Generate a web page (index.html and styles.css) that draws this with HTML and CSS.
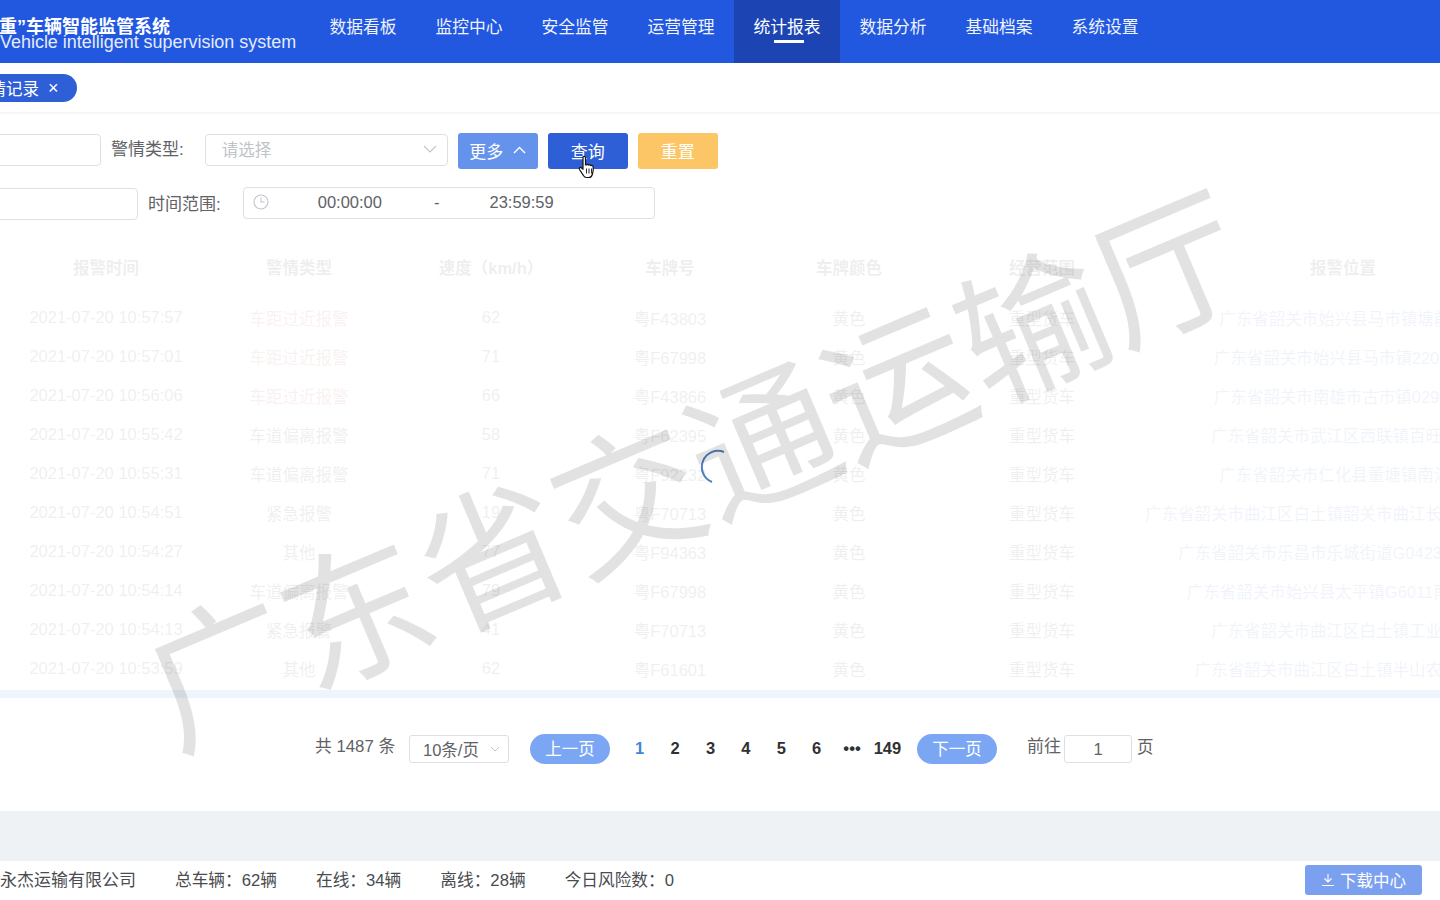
FILE: index.html
```html
<!DOCTYPE html>
<html>
<head>
    <title>报警记录</title>
    <link rel="stylesheet" href="styles.css">
</head>
<body>
    <div class="app">
        <header class="topbar">
            <div class="logo">
                <div class="logo-title">“两客一重”车辆智能监管系统</div>
                <div class="logo-sub">Vehicle intelligent supervision system</div>
            </div>
            <nav class="nav">
                <a class="nav-item">数据看板</a>
                <a class="nav-item">监控中心</a>
                <a class="nav-item">安全监管</a>
                <a class="nav-item">运营管理</a>
                <a class="nav-item active">统计报表</a>
                <a class="nav-item">数据分析</a>
                <a class="nav-item">基础档案</a>
                <a class="nav-item">系统设置</a>
            </nav>
        </header>

        <main class="content">
            <div class="tabs">
                <span class="tab">警情记录 <i class="tab-close">×</i></span>
            </div>

            <div class="filters">
                <div class="filter-row first">
                    <div class="input short"></div>
                    <label class="filter-label">警情类型:</label>
                    <div class="input select">
                        <span class="placeholder">请选择</span>
                        <svg class="chevron" width="14" height="8" viewBox="0 0 14 8"><path d="M1 1l6 6 6-6" fill="none" stroke="#c0c4cc" stroke-width="1.1"/></svg>
                    </div>
                    <button class="btn btn-more">更多
                        <svg width="13" height="8" viewBox="0 0 13 8"><path d="M1 7l5.500-5.500L12 7" fill="none" stroke="#fff" stroke-width="1.4"/></svg>
                    </button>
                    <button class="btn btn-query">查询</button>
                    <button class="btn btn-reset">重置</button>
                </div>
                <div class="filter-row second">
                    <div class="input long"></div>
                    <label class="filter-label">时间范围:</label>
                    <div class="input time-range">
                        <svg class="clock" width="16" height="16" viewBox="0 0 16 16"><circle cx="8" cy="8" r="7" fill="none" stroke="#c0c4cc" stroke-width="1.1"/><path d="M8 3.500V8h3.500" fill="none" stroke="#c0c4cc" stroke-width="1.1"/></svg>
                        <span class="time-start">00:00:00</span>
                        <span class="time-sep">-</span>
                        <span class="time-end">23:59:59</span>
                    </div>
                </div>
            </div>

            <div class="table-wrap">
                <table class="data-table">
                    <colgroup>
                        <col class="c1"><col class="c2"><col class="c3"><col class="c4"><col class="c5"><col class="c6"><col class="c7">
                    </colgroup>
                    <thead>
                        <tr><th>报警时间</th><th>警情类型</th><th>速度（km/h）</th><th>车牌号</th><th>车牌颜色</th><th>经营范围</th><th>报警位置</th></tr>
                    </thead>
                    <tbody>
                        <tr><td>2021-07-20 10:57:57</td><td class="warn">车距过近报警</td><td>62</td><td>粤F43803</td><td>黄色</td><td>重型货车</td><td class="place">广东省韶关市始兴县马市镇塘前村</td></tr>
                        <tr><td>2021-07-20 10:57:01</td><td class="warn">车距过近报警</td><td>71</td><td>粤F67998</td><td>黄色</td><td>重型货车</td><td class="place">广东省韶关市始兴县马市镇220国道</td></tr>
                        <tr><td>2021-07-20 10:56:06</td><td class="warn">车距过近报警</td><td>66</td><td>粤F43866</td><td>黄色</td><td>重型货车</td><td class="place">广东省韶关市南雄市古市镇029县道</td></tr>
                        <tr><td>2021-07-20 10:55:42</td><td>车道偏离报警</td><td>58</td><td>粤F62395</td><td>黄色</td><td>重型货车</td><td class="place">广东省韶关市武江区西联镇百旺大道</td></tr>
                        <tr><td>2021-07-20 10:55:31</td><td>车道偏离报警</td><td>71</td><td>粤F92232</td><td>黄色</td><td>重型货车</td><td class="place">广东省韶关市仁化县董塘镇南浦村</td></tr>
                        <tr><td>2021-07-20 10:54:51</td><td>紧急报警</td><td>19</td><td>粤F70713</td><td>黄色</td><td>重型货车</td><td class="place">广东省韶关市曲江区白土镇韶关市曲江长城水泥厂路段</td></tr>
                        <tr><td>2021-07-20 10:54:27</td><td>其他</td><td>77</td><td>粤F94363</td><td>黄色</td><td>重型货车</td><td class="place">广东省韶关市乐昌市乐城街道G0423乐广高速</td></tr>
                        <tr><td>2021-07-20 10:54:14</td><td>车道偏离报警</td><td>79</td><td>粤F67998</td><td>黄色</td><td>重型货车</td><td class="place">广东省韶关市始兴县太平镇G6011南韶高速</td></tr>
                        <tr><td>2021-07-20 10:54:13</td><td>紧急报警</td><td>41</td><td>粤F70713</td><td>黄色</td><td>重型货车</td><td class="place">广东省韶关市曲江区白土镇工业园区</td></tr>
                        <tr><td>2021-07-20 10:53:59</td><td>其他</td><td>62</td><td>粤F61601</td><td>黄色</td><td>重型货车</td><td class="place">广东省韶关市曲江区白土镇半山农场路段</td></tr>
                    </tbody>
                </table>
                <div class="scroll-track"></div>
                <div class="loading-mask">
                    <svg class="spinner" width="44" height="44" viewBox="0 0 44 44"><path d="M26 5A16 16 0 0 0 14 35" fill="none" stroke="#4f7fbe" stroke-width="2"/></svg>
                </div>
            </div>

            <div class="pager">
                <span class="total">共 1487 条</span>
                <div class="page-size">10条/页
                    <svg width="10" height="6" viewBox="0 0 10 6"><path d="M1 1l4 4 4-4" fill="none" stroke="#c0c4cc"/></svg>
                </div>
                <button class="page-btn prev">上一页</button>
                <ul class="pages">
                    <li class="current">1</li><li>2</li><li>3</li><li>4</li><li>5</li><li>6</li><li>•••</li><li>149</li>
                </ul>
                <button class="page-btn next">下一页</button>
                <span class="goto">前往</span>
                <div class="page-input">1</div>
                <span class="goto-end">页</span>
            </div>
        </main>

        <div class="gray-band"></div>

        <footer class="statusbar">
            <span class="company">广东永杰运输有限公司</span>
            <span>总车辆：62辆</span>
            <span>在线：34辆</span>
            <span>离线：28辆</span>
            <span>今日风险数：0</span>
            <button class="download">
                <svg width="14" height="14" viewBox="0 0 14 14"><path d="M7 1v8M3.500 5.500L7 9l3.500-3.500M1 12.500h12" fill="none" stroke="#fff" stroke-width="1.1"/></svg>
                下载中心
            </button>
        </footer>

        <div class="watermark">广东省交通运输厅</div>

        <svg class="cursor" width="20" height="26" viewBox="0 0 20 26">
            <path d="M6 2c1-1 2.500-.500 2.500 1v7l1-.2c.8-.6 1.800-.4 2.200.3.800-.5 1.800-.3 2.200.5.900-.4 2-.1 2.200 1 .3 2 .2 5-.6 7.400-.6 2-1.800 3.500-3.500 3.500H9.500c-1.600 0-2.500-1-3.300-2.300L2.500 14.500c-.8-1.300.6-2.600 1.800-1.700L6 14.200V3z" fill="#fff" stroke="#111" stroke-width="1.2" stroke-linejoin="round"/>
            <path d="M9.500 13.500v5M12 13.500v5M14.500 13.500v5" stroke="#111" stroke-width=".9" fill="none"/>
        </svg>
    </div>
</body>
</html>
```

FILE: styles.css
```css
* {
    box-sizing: border-box;
}

html,
body {
    margin: 0;
    padding: 0;
    height: 100%;
    overflow: hidden;
    background-color: #fff;
    font-family: "Liberation Sans", "Noto Sans CJK SC", sans-serif;
    font-size: 16.5px;
    color: #606266;
}

.app {
    position: relative;
    width: 1440px;
    height: 900px;
    overflow: hidden;
    display: flex;
    flex-direction: column;
}

button {
    font-family: inherit;
    border: 0;
}

/* top bar */
.topbar {
    height: 63px;
    flex-shrink: 0;
    display: flex;
    background-color: #2257e0;
    color: #fff;
}

.logo {
    width: 311px;
    flex-shrink: 0;
    padding-top: 17px;
    white-space: nowrap;
    overflow: hidden;
}

.logo-title {
    margin-left: -64px;
    font-size: 18px;
    font-weight: bold;
    line-height: 21px;
}

.logo-sub {
    margin-top: -6px;
    font-size: 17.94px;
    line-height: 20px;
    color: #e4ebfb;
}

.nav {
    display: flex;
    margin-left: -1px;
}

.nav-item {
    position: relative;
    width: 106px;
    text-align: center;
    font-size: 16.8px;
    line-height: 56px;
    color: #eef3fd;
}

.nav-item.active {
    background-color: #1c45b3;
    color: #fff;
}

.nav-item.active::after {
    content: "";
    position: absolute;
    left: 40px;
    top: 40px;
    width: 30px;
    height: 3px;
    background-color: #fff;
}

/* main box */
.content {
    height: 748px;
    flex-shrink: 0;
    background-color: #fff;
}

.tabs {
    height: 51px;
    padding-top: 11px;
    border-bottom: 2px solid #f5f6f8;
}

.tab {
    display: inline-flex;
    align-items: center;
    gap: 9px;
    height: 28px;
    width: 114px;
    margin-left: -37px;
    padding-left: 10px;
    border-radius: 14px;
    background-color: #2f5fd6;
    color: #fff;
    white-space: nowrap;
    font-size: 16.5px;
}

.tab-close {
    font-style: normal;
    font-size: 18px;
    line-height: 1;
}

.filters {
    height: 126px;
}

.filter-row {
    display: flex;
    align-items: center;
}

.filter-row.first {
    padding-top: 19px;
    height: 55px;
}

.filter-row.second {
    height: 54px;
    padding-top: 14px;
}

.input {
    height: 32px;
    border: 1px solid #dcdfe6;
    border-radius: 4px;
    background-color: #fff;
}

.filter-row.first .input {
    margin-top: -2px;
}

.input.short {
    width: 120px;
    margin-left: -19px;
}

.input.long {
    width: 158px;
    margin-left: -20px;
    margin-top: 2px;
}

.filter-label {
    margin-left: 10px;
    white-space: nowrap;
    color: #606266;
    font-size: 17px;
}

.filter-row.first .filter-label {
    margin-top: -8px;
}

.filter-row.second .filter-label {
    margin-top: -2px;
}

.select {
    width: 243px;
    margin-left: 21px;
    padding: 0 10px 2px 16px;
    display: flex;
    align-items: center;
    justify-content: space-between;
}

.placeholder {
    color: #bfc3ca;
}

.btn {
    width: 80px;
    height: 36px;
    margin-left: 10px;
    border-radius: 3px;
    color: #fff;
    font-size: 17px;
    padding: 0 0 2px;
}

.btn-more {
    background-color: #6593ec;
    display: flex;
    align-items: center;
    justify-content: center;
    gap: 10px;
}

.btn-query {
    background-color: #2f5fd6;
}

.btn-reset {
    background-color: #fcc566;
}

.time-range {
    position: relative;
    width: 412px;
    margin-left: 22px;
    padding-bottom: 2px;
    display: flex;
    align-items: center;
    color: #606266;
}

.clock {
    margin-left: 9px;
}

.time-start {
    margin-left: 49px;
}

.time-sep {
    margin-left: 52px;
}

.time-end {
    margin-left: 50px;
}

/* table under the loading mask */
.table-wrap {
    position: relative;
    height: 458px;
    overflow: hidden;
}

.data-table {
    width: 1538px;
    margin-left: 9px;
    border-collapse: collapse;
    table-layout: fixed;
}

.c1 { width: 194px; }
.c2 { width: 192px; }
.c3 { width: 192px; }
.c4 { width: 166px; }
.c5 { width: 192px; }
.c6 { width: 194px; }
.c7 { width: 408px; }

.data-table th {
    height: 58px;
    padding: 0 0 4px;
    font-weight: bold;
    text-align: center;
    color: #55585e;
}

.data-table td {
    height: 39px;
    padding: 0;
    text-align: center;
    white-space: nowrap;
    overflow: hidden;
    border-top: 1px solid #ebeef5;
}

.warn {
    color: #c46a6a;
}

.place {
    color: #6c8fc8;
}

.scroll-track {
    position: absolute;
    left: 0;
    right: 0;
    bottom: 0;
    height: 8px;
    background-color: #559be1;
}

.loading-mask {
    position: absolute;
    inset: 0;
    background-color: rgba(255, 255, 255, 0.9);
    display: flex;
    align-items: center;
    justify-content: center;
}

/* pagination */
.pager {
    height: 113px;
    padding-top: 36px;
    padding-left: 315px;
    display: flex;
    align-items: flex-start;
    white-space: nowrap;
}

.total {
    line-height: 26px;
    width: 94px;
    flex-shrink: 0;
    font-size: 16.8px;
}

.page-size {
    width: 100px;
    height: 28px;
    margin-top: 1px;
    padding: 0 8px 0 13px;
    border: 1px solid #dcdfe6;
    border-radius: 3px;
    display: flex;
    align-items: center;
    justify-content: space-between;
}

.page-btn {
    width: 80px;
    height: 30px;
    border-radius: 15px;
    background-color: #7ba6f3;
    color: #fff;
    font-size: 16.5px;
    padding: 0 0 2px;
}

.prev {
    margin-left: 21px;
}

.pages {
    list-style: none;
    margin: 0 0 0 11px;
    padding: 0 0 0 1px;
    display: flex;
    width: 296px;
    height: 30px;
    line-height: 28px;
    color: #303133;
    font-weight: bold;
    font-size: 16.5px;
}

.pages li {
    width: 35.4px;
    text-align: center;
}

.pages .current {
    color: #3f86d8;
}

.goto {
    margin-left: 30px;
    line-height: 26px;
    font-size: 17px;
}

.page-input {
    width: 68px;
    height: 28px;
    margin: 1px 5px 0 3px;
    border: 1px solid #dcdfe6;
    border-radius: 3px;
    text-align: center;
    line-height: 27px;
}

.goto-end {
    line-height: 26px;
}

/* footer */
.gray-band {
    height: 50px;
    flex-shrink: 0;
    background-color: #eff2f5;
}

.statusbar {
    flex: 1;
    display: flex;
    align-items: center;
    gap: 39px;
    padding-right: 18px;
    padding-bottom: 4px;
    color: #4a4c50;
    font-size: 16.7px;
    white-space: nowrap;
}

.company {
    width: 136px;
    flex-shrink: 0;
    direction: rtl;
    overflow: hidden;
    font-size: 17px;
}

.download {
    margin-left: auto;
    margin-top: 2px;
    width: 117px;
    height: 30px;
    border-radius: 3px;
    background-color: #7ba0f0;
    color: #fff;
    font-size: 16.5px;
    display: flex;
    align-items: center;
    justify-content: center;
    gap: 5px;
    padding: 0;
}

/* overlays */
.watermark {
    position: absolute;
    left: 691px;
    top: 461px;
    transform: translate(-50%, -50%) rotate(-23deg);
    font-size: 147px;
    line-height: 1;
    white-space: nowrap;
    color: rgba(0, 0, 0, 0.115);
    font-family: "Noto Sans CJK SC", sans-serif;
    font-weight: 400;
    pointer-events: none;
}

.cursor {
    position: absolute;
    left: 577px;
    top: 155px;
}
```
